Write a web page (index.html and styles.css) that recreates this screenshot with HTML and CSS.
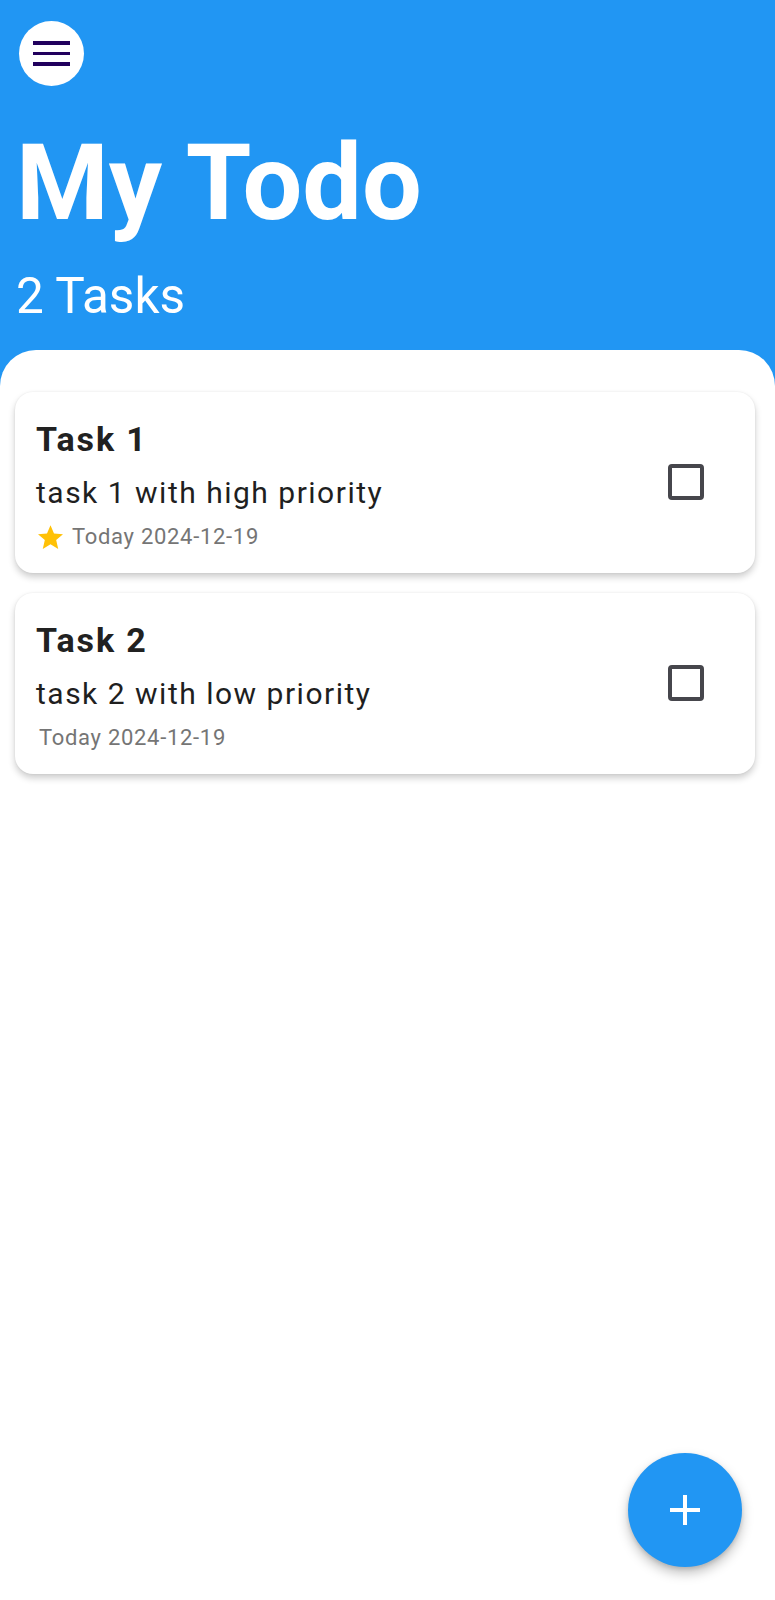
FILE: index.html
```html
<!DOCTYPE html>
<html lang="en">
<head>
<meta charset="utf-8">
<title>My Todo</title>
<link rel="stylesheet" href="styles.css">
</head>
<body>
<div class="app">
  <header class="header">
    <button class="menu-btn" aria-label="Menu">
      <span class="bar"></span><span class="bar"></span><span class="bar"></span>
    </button>
    <h1 class="title">My Todo</h1>
    <div class="subtitle">2 Tasks</div>
  </header>
  <main class="panel">
    <div class="card">
      <div class="card-body">
        <div class="card-title">Task 1</div>
        <div class="card-desc">task 1 with high priority</div>
        <div class="card-meta">
          <svg class="star" viewBox="2 2 20 19" aria-hidden="true"><path d="M12 17.27L18.18 21l-1.64-7.03L22 9.24l-7.19-.61L12 2 9.19 8.63 2 9.24l5.46 4.73L5.82 21z" fill="#FFC107"/></svg>
          <span class="date">Today 2024-12-19</span>
        </div>
      </div>
      <span class="checkbox"></span>
    </div>
    <div class="card">
      <div class="card-body">
        <div class="card-title">Task 2</div>
        <div class="card-desc">task 2 with low priority</div>
        <div class="card-meta no-star">
          <span class="date">Today 2024-12-19</span>
        </div>
      </div>
      <span class="checkbox"></span>
    </div>
  </main>
  <button class="fab" aria-label="Add task">
    <svg viewBox="0 0 30 30" aria-hidden="true"><path d="M15 0V30M0 15H30" stroke="#fff" stroke-width="4"/></svg>
  </button>
</div>
</body>
</html>
```

FILE: styles.css
```css
html, body {
  margin: 0;
  padding: 0;
}
body {
  background: #2196F3;
  font-family: Roboto, "Noto Sans", "Liberation Sans", sans-serif;
}
.app {
  min-height: 100vh;
  display: flex;
  flex-direction: column;
}
.header {
  padding: 21px 0 30px 16px;
  color: #fff;
}
.menu-btn {
  width: 65px;
  height: 65px;
  margin-left: 3px;
  border: none;
  border-radius: 50%;
  background: #fff;
  padding: 0;
  display: flex;
  flex-direction: column;
  align-items: center;
  justify-content: center;
  gap: 7px;
}
.menu-btn .bar {
  display: block;
  width: 37px;
  height: 3.5px;
  background: #21005D;
}
.title {
  margin: 45px 0 0 0;
  font-size: 106px;
  line-height: 104px;
  font-weight: 700;
}
.subtitle {
  margin-top: 37px;
  font-size: 49.5px;
  line-height: 48px;
  font-weight: 400;
}
.panel {
  flex: 1;
  background: #fff;
  border-radius: 36px 36px 0 0;
  padding: 42px 20px 0 15px;
  display: flex;
  flex-direction: column;
  gap: 20px;
}
.card {
  background: #fff;
  border-radius: 18px;
  box-shadow: 0 4px 7px rgba(0, 0, 0, 0.2), 0 0 2px rgba(0, 0, 0, 0.08);
  padding: 27px 51px 22px 21px;
  display: flex;
  align-items: center;
}
.card-body {
  flex: 1;
}
.card-title {
  font-size: 34px;
  line-height: 40px;
  font-weight: 700;
  letter-spacing: 1.9px;
  color: #212121;
}
.card-desc {
  margin-top: 16px;
  font-size: 30px;
  line-height: 36px;
  letter-spacing: 1.5px;
  color: #1f1f1f;
}
.card-meta {
  margin-top: 12px;
  display: flex;
  align-items: center;
  gap: 9px;
  height: 28px;
}
.card-meta.no-star {
  padding-left: 3px;
}
.star {
  width: 25px;
  height: 24px;
  margin-left: 2px;
}
.date {
  font-size: 22px;
  line-height: 28px;
  letter-spacing: 0.7px;
  color: #757575;
}
.checkbox {
  width: 28px;
  height: 28px;
  margin-bottom: 6px;
  border: 4px solid #46464c;
  border-radius: 4px;
}
.fab {
  position: fixed;
  right: 33px;
  bottom: 33px;
  width: 114px;
  height: 114px;
  border: none;
  border-radius: 50%;
  background: #2196F3;
  box-shadow: 0 6px 12px rgba(0, 0, 0, 0.25), 0 2px 4px rgba(0, 0, 0, 0.12);
  display: flex;
  align-items: center;
  justify-content: center;
  padding: 0;
}
.fab svg {
  width: 30px;
  height: 30px;
}
```
